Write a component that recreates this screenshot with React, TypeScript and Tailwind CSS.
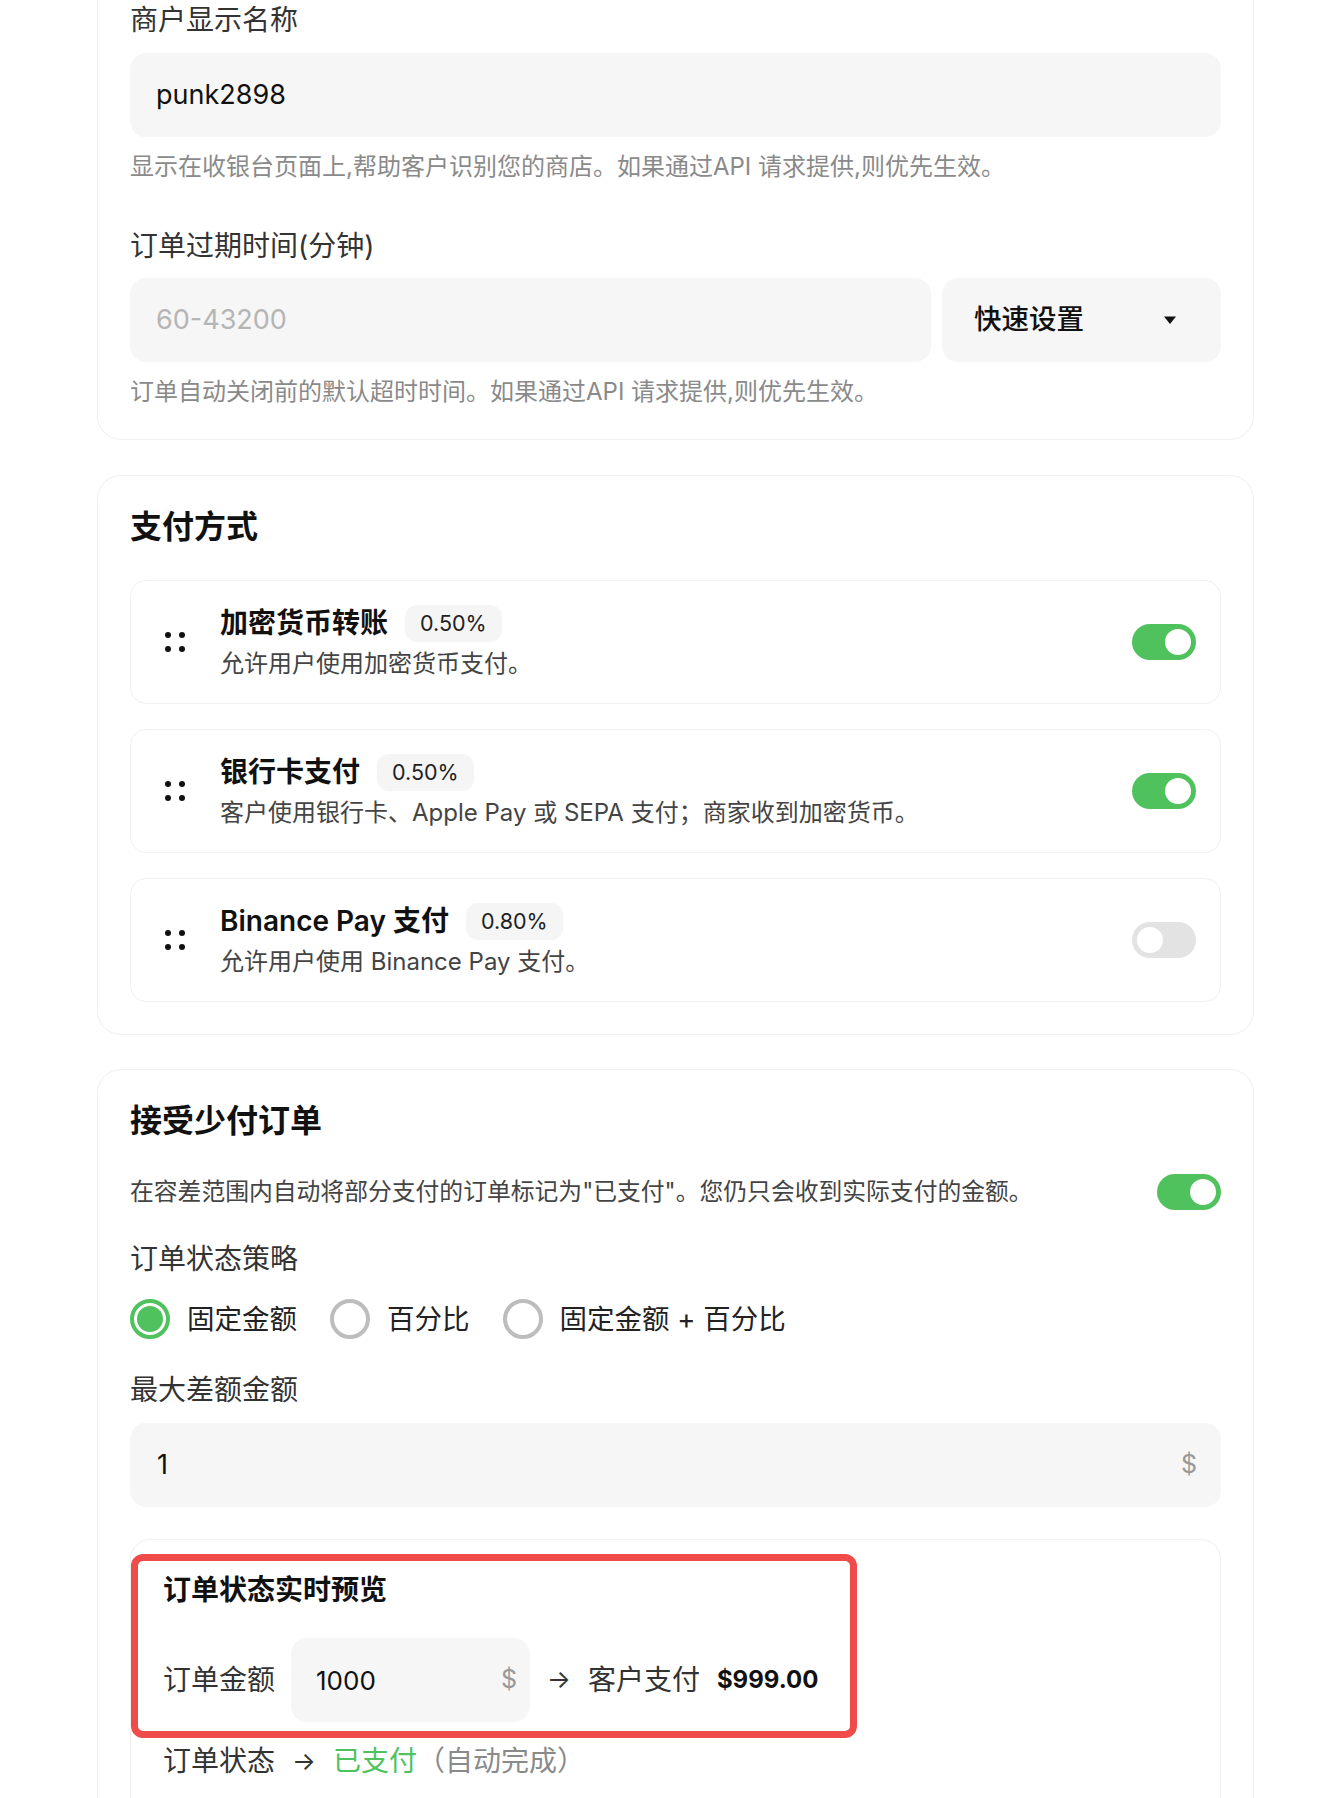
import React from 'react'

const font = { fontFamily: 'Inter, "Noto Sans CJK SC", sans-serif' }

const Toggle = ({ on }: { on: boolean }) => (
  <div
    className={`w-[64px] h-[36px] rounded-full flex items-center px-[5px] shrink-0 ${
      on ? 'bg-[#4fc25d] justify-end' : 'bg-[#e3e3e3] justify-start'
    }`}
  >
    <div className="w-[26px] h-[26px] rounded-full bg-white" />
  </div>
)

const Radio = ({ checked, label }: { checked: boolean; label: string }) => (
  <div className="flex items-center gap-[17px]">
    {checked ? (
      <div className="w-[40px] h-[40px] rounded-full border-[4px] border-[#4fc25d] p-[3px]">
        <div className="w-full h-full rounded-full bg-[#4fc25d]" />
      </div>
    ) : (
      <div className="w-[40px] h-[40px] rounded-full border-[4px] border-[#bdbdbd]" />
    )}
    <span className="text-[27.5px] leading-[36px] text-[#222]">{label}</span>
  </div>
)

const DragDots = () => (
  <div className="grid grid-cols-2 gap-[8px] w-[20px] shrink-0">
    <span className="w-[6px] h-[6px] rounded-full bg-[#111]" />
    <span className="w-[6px] h-[6px] rounded-full bg-[#111]" />
    <span className="w-[6px] h-[6px] rounded-full bg-[#111]" />
    <span className="w-[6px] h-[6px] rounded-full bg-[#111]" />
  </div>
)

const methods = [
  { title: '加密货币转账', fee: '0.50%', desc: '允许用户使用加密货币支付。', on: true },
  { title: '银行卡支付', fee: '0.50%', desc: '客户使用银行卡、Apple Pay 或 SEPA 支付；商家收到加密货币。', on: true },
  { title: 'Binance Pay 支付', fee: '0.80%', desc: '允许用户使用 Binance Pay 支付。', on: false },
]

export default function App() {
  return (
    <div className="w-full h-[1798px] overflow-hidden bg-white text-[#222]" style={font}>
      <div className="pl-[97px] w-[1254px] flex flex-col">
        {/* Basic settings card (scrolled past its top) */}
        <section className="mt-[-31px] rounded-[24px] border border-[#efefef] px-[32px] pt-[32px] pb-[31px]">
          <div className="text-[28px] leading-[36px] text-[#333]">商户显示名称</div>
          <div className="mt-[15px] h-[84px] rounded-[16px] bg-[#f6f6f6] flex items-center pl-[26px] text-[27px] text-[#111]">
            punk2898
          </div>
          <p className="mt-[14px] text-[24px] leading-[32px] text-[#8a8a8a]">
            显示在收银台页面上,帮助客户识别您的商店。如果通过API 请求提供,则优先生效。
          </p>

          <div className="mt-[45px] text-[28px] leading-[36px] text-[#333]">订单过期时间(分钟)</div>
          <div className="mt-[14px] flex gap-[11px]">
            <div className="flex-1 h-[84px] rounded-[16px] bg-[#f6f6f6] flex items-center pl-[26px] text-[27px] text-[#b5b5b5]">
              60-43200
            </div>
            <div className="w-[279px] h-[84px] rounded-[16px] bg-[#f6f6f6] flex items-center justify-between pl-[32px] pr-[44px]">
              <span className="text-[27.5px] font-medium text-[#111]">快速设置</span>
              <svg width="14" height="10" viewBox="0 0 14 10">
                <path d="M1 1.5h12L7 9z" fill="#111" />
              </svg>
            </div>
          </div>
          <p className="mt-[14px] text-[24px] leading-[32px] text-[#8a8a8a]">
            订单自动关闭前的默认超时时间。如果通过API 请求提供,则优先生效。
          </p>
        </section>

        {/* Payment methods */}
        <section className="mt-[35px] rounded-[24px] border border-[#efefef] px-[32px] pt-[31px] pb-[32px]">
          <h2 className="text-[32px] leading-[40px] font-semibold text-[#111]">支付方式</h2>
          <div className="mt-[33px] flex flex-col gap-[25px]">
            {methods.map((m) => (
              <div
                key={m.title}
                className="h-[124px] rounded-[16px] border border-[#f0f0f0] flex items-center pl-[34px] pr-[24px]"
              >
                <DragDots />
                <div className="ml-[35px] flex-1">
                  <div className="flex items-center gap-[17px] h-[37px]">
                    <span className="text-[28px] font-semibold text-[#111]">{m.title}</span>
                    <span className="h-[37px] px-[15px] rounded-[12px] bg-[#f5f5f5] flex items-center text-[21.5px] text-[#222]">
                      {m.fee}
                    </span>
                  </div>
                  <div className="mt-[6px] text-[24px] leading-[32px] text-[#444]">{m.desc}</div>
                </div>
                <Toggle on={m.on} />
              </div>
            ))}
          </div>
        </section>

        {/* Underpayment */}
        <section className="mt-[34px] rounded-t-[24px] border border-[#efefef] px-[32px] pt-[31px] pb-[200px]">
          <h2 className="text-[32px] leading-[40px] font-semibold text-[#111]">接受少付订单</h2>
          <div className="mt-[32px] flex items-center justify-between h-[37px]">
            <p className="text-[23.8px] leading-[32px] text-[#444]">
              在容差范围内自动将部分支付的订单标记为"已支付"。您仍只会收到实际支付的金额。
            </p>
            <Toggle on />
          </div>

          <div className="mt-[31px] text-[28px] leading-[36px] text-[#333]">订单状态策略</div>
          <div className="mt-[22px] flex items-center gap-[33px]">
            <Radio checked label="固定金额" />
            <Radio checked={false} label="百分比" />
            <Radio checked={false} label="固定金额 + 百分比" />
          </div>

          <div className="mt-[33px] text-[28px] leading-[36px] text-[#333]">最大差额金额</div>
          <div className="mt-[15px] h-[84px] rounded-[16px] bg-[#f6f6f6] flex items-center justify-between pl-[27px] pr-[24px]">
            <span className="text-[27px] text-[#111]">1</span>
            <span className="text-[25px] text-[#999]">$</span>
          </div>

          {/* Live preview */}
          <div className="relative mt-[32px] rounded-[20px] border border-[#f0f0f0] pl-[32px] pt-[31px] pb-[120px]">
            <h3 className="text-[28px] leading-[38px] font-semibold text-[#111]">订单状态实时预览</h3>
            <div className="mt-[29px] flex items-center">
              <span className="text-[28px] text-[#333]">订单金额</span>
              <div className="ml-[16px] w-[239px] h-[84px] rounded-[16px] bg-[#f6f6f6] flex items-center justify-between pl-[25px] pr-[13px]">
                <span className="text-[26px] text-[#111]">1000</span>
                <span className="text-[25px] text-[#999]">$</span>
              </div>
              <span className="ml-[17px] text-[25px] text-[#333]">→</span>
              <span className="ml-[17px] text-[28px] text-[#333]">客户支付</span>
              <span className="ml-[17px] text-[24px] font-bold text-[#111]">$999.00</span>
            </div>
            <div className="mt-[21px] flex items-center text-[28px] leading-[36px]">
              <span className="text-[#333]">订单状态</span>
              <span className="ml-[17px] text-[25px] text-[#333]">→</span>
              <span className="ml-[17px] text-[#4fc25d]">已支付</span>
              <span className="text-[#8a8a8a]">（自动完成）</span>
            </div>

            {/* highlight annotation */}
            <div className="absolute left-0 top-[14px] w-[726px] h-[184px] rounded-[12px] border-[7px] border-[#f04b4b]" />
          </div>
        </section>
      </div>
    </div>
  )
}
